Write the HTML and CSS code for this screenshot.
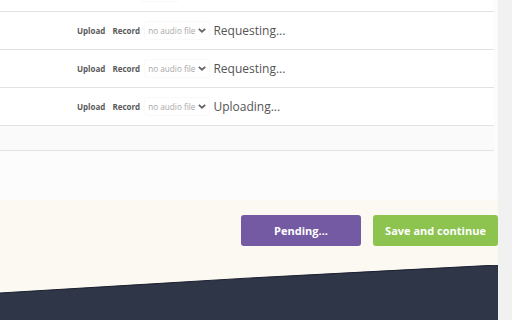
FILE: index.html
```html
<!DOCTYPE html>
<html lang="en">
<head>
    <meta charset="UTF-8">
    <meta name="viewport" content="width=device-width, initial-scale=1.0">
    <title>Audio files</title>
    <link rel="stylesheet" href="styles.css">
</head>
<body>
    <div class="page">
        <div class="card">
            <div class="row row-top">
                <span class="select select-empty"></span>
            </div>
            <div class="row">
                <span class="action">Upload</span>
                <span class="action">Record</span>
                <span class="select">no audio file
                    <svg class="chevron" viewBox="0 0 10 6" width="8" height="5"><path d="M1 1l4 3.5L9 1" /></svg>
                </span>
                <span class="status">Requesting...</span>
            </div>
            <div class="row">
                <span class="action">Upload</span>
                <span class="action">Record</span>
                <span class="select">no audio file
                    <svg class="chevron" viewBox="0 0 10 6" width="8" height="5"><path d="M1 1l4 3.5L9 1" /></svg>
                </span>
                <span class="status">Requesting...</span>
            </div>
            <div class="row">
                <span class="action">Upload</span>
                <span class="action">Record</span>
                <span class="select">no audio file
                    <svg class="chevron" viewBox="0 0 10 6" width="8" height="5"><path d="M1 1l4 3.5L9 1" /></svg>
                </span>
                <span class="status">Uploading...</span>
            </div>
            <div class="row row-blank"></div>
            <div class="card-foot"></div>
        </div>

        <div class="actions">
            <button class="btn btn-pending">Pending...</button>
            <button class="btn btn-save">Save and continue</button>
        </div>

        <svg class="wave" viewBox="0 0 498 55" preserveAspectRatio="none">
            <path d="M0 28 Q250 12 498 0 L498 55 L0 55 Z" fill="#2e3647" />
            <path d="M0 28 Q250 12 498 0" fill="none" stroke="#1b2030" stroke-width="1" />
        </svg>
    </div>
    <div class="scrollbar"></div>
</body>
</html>
```

FILE: styles.css
```css
body {
    margin: 0;
    display: flex;
    height: 320px;
    overflow: hidden;
    font-family: "Open Sans", "Noto Sans", sans-serif;
    background-color: #f1f1f1;
}
.page {
    flex: 1;
    display: flex;
    flex-direction: column;
    background-color: #fcf9f2;
    overflow: hidden;
}
.scrollbar {
    width: 14px;
    background-color: #f1f1f1;
}
.card {
    margin-top: -26px;
    margin-right: 1px;
    background-color: #fcfcfc;
    border-radius: 0 0 4px 4px;
}
.row {
    box-sizing: border-box;
    height: 38px;
    margin-right: 3px;
    padding-left: 77px;
    display: flex;
    align-items: center;
    background-color: #fff;
    border-bottom: 1px solid #e2e2e2;
}
.row-top {
    padding-left: 143px;
}
.row-blank {
    height: 25px;
    background-color: #fafafa;
}
.card-foot {
    height: 49px;
}
.action {
    font-size: 8px;
    font-weight: 700;
    color: #5a5a5a;
    margin-right: 7px;
}
.select {
    box-sizing: border-box;
    display: flex;
    align-items: center;
    height: 19px;
    padding: 0 3px 0 3px;
    margin-left: -3px;
    margin-right: 3px;
    font-size: 8.2px;
    color: #a8a8a8;
    background-color: #fff;
    border: 1px solid #f9f9f9;
    border-radius: 3px;
}
.select-empty {
    width: 38px;
}
.chevron {
    margin-left: 3px;
    fill: none;
    stroke: #666;
    stroke-width: 2.4;
}
.status {
    font-size: 12px;
    color: #555;
}
.actions {
    display: flex;
    justify-content: flex-end;
    gap: 12px;
    padding-top: 15px;
}
.btn {
    height: 31px;
    border: none;
    border-radius: 3px;
    color: #fff;
    font-family: "Open Sans", "Noto Sans", sans-serif;
    font-size: 11px;
    font-weight: 700;
    cursor: pointer;
}
.btn-pending {
    width: 120px;
    background-color: #735aa3;
}
.btn-save {
    width: 125px;
    background-color: #8cc44f;
}
.wave {
    display: block;
    width: 100%;
    height: 55px;
    margin-top: 19px;
}
```
